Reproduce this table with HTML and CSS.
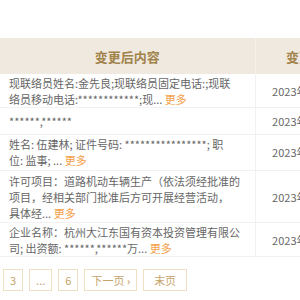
FILE: index.html
```html
<!DOCTYPE html>
<html lang="zh-CN">
<head>
<meta charset="utf-8">
<title>变更记录</title>
<link rel="stylesheet" href="styles.css">
</head>
<body>
<div class="page">
  <table class="change-table">
    <colgroup>
      <col class="col-content">
      <col class="col-date">
    </colgroup>
    <thead>
      <tr>
        <th class="th-content">变更后内容</th>
        <th class="th-date">变更日期</th>
      </tr>
    </thead>
    <tbody>
      <tr>
        <td class="cell-content">现联络员姓名:金先良;现联络员固定电话:;现联<br>络员移动电话:************;现... <a class="more">更多</a></td>
        <td class="cell-date">2023年08月23日</td>
      </tr>
      <tr class="row-single">
        <td class="cell-content">******,******</td>
        <td class="cell-date">2023年08月23日</td>
      </tr>
      <tr class="row-pair">
        <td class="cell-content">姓名: 伍建林; 证件号码: ****************; 职<br>位: 监事; ... <a class="more">更多</a></td>
        <td class="cell-date">2023年08月23日</td>
      </tr>
      <tr class="row-triple">
        <td class="cell-content">许可项目：道路机动车辆生产（依法须经批准的<br>项目，经相关部门批准后方可开展经营活动，<br>具体经... <a class="more">更多</a></td>
        <td class="cell-date">2023年08月23日</td>
      </tr>
      <tr>
        <td class="cell-content">企业名称：杭州大江东国有资本投资管理有限公<br>司; 出资额: ******,******万... <a class="more">更多</a></td>
        <td class="cell-date">2023年08月23日</td>
      </tr>
    </tbody>
  </table>
  <div class="pager">
    <a class="pg">3</a>
    <a class="pg">...</a>
    <a class="pg">6</a>
    <a class="pg">下一页 <span class="pg-arrow">›</span></a>
    <a class="pg pg-wide">末页</a>
  </div>
</div>
</body>
</html>
```
FILE: styles.css
```css
html, body {
  margin: 0;
  padding: 0;
  overflow: hidden;
  background: #ffffff;
}

body {
  font-family: "Noto Sans CJK SC", "Noto Sans", sans-serif;
  font-size: 11px;
  color: #666666;
}

.page {
  padding-top: 38px;
}

.change-table {
  border-collapse: collapse;
  table-layout: fixed;
  width: 369px;
}

.col-content {
  width: 255px;
}

.col-date {
  width: 114px;
}

.change-table th {
  height: 36px;
  padding: 0;
  background: #efe9df;
  color: #a1834b;
  font-size: 13px;
  font-weight: bold;
  text-align: center;
  border-right: 1px solid #f5f1ea;
}

.th-content {
  padding-left: 4px;
}

.change-table td {
  padding: 1px 9px 0;
  line-height: 16px;
  vertical-align: middle;
  border-bottom: 1px solid #f1f1f1;
  border-right: 1px solid #f1f1f1;
}

.change-table .cell-content {
  white-space: nowrap;
  overflow: hidden;
}

.change-table .cell-date {
  padding: 0 0 0 2px;
  text-align: center;
}

.change-table .row-single td {
  padding-top: 5px;
  padding-bottom: 5px;
}

.change-table .row-pair td {
  padding-top: 1px;
  padding-bottom: 2px;
}

.change-table .row-triple td {
  padding-top: 2px;
  padding-bottom: 1px;
}

.more {
  color: #f5a04a;
}

.pager {
  display: flex;
  gap: 6px;
  padding: 12px 0 0 3px;
}

.pg {
  box-sizing: border-box;
  height: 22px;
  min-width: 20px;
  padding: 0 6px;
  border: 1px solid #efe0c4;
  color: #c6a46c;
  font-size: 11px;
  line-height: 20px;
  text-align: center;
}

.pg-wide {
  padding: 0 10px;
}

.pg-arrow {
  font-size: 10px;
  font-weight: bold;
}
```
